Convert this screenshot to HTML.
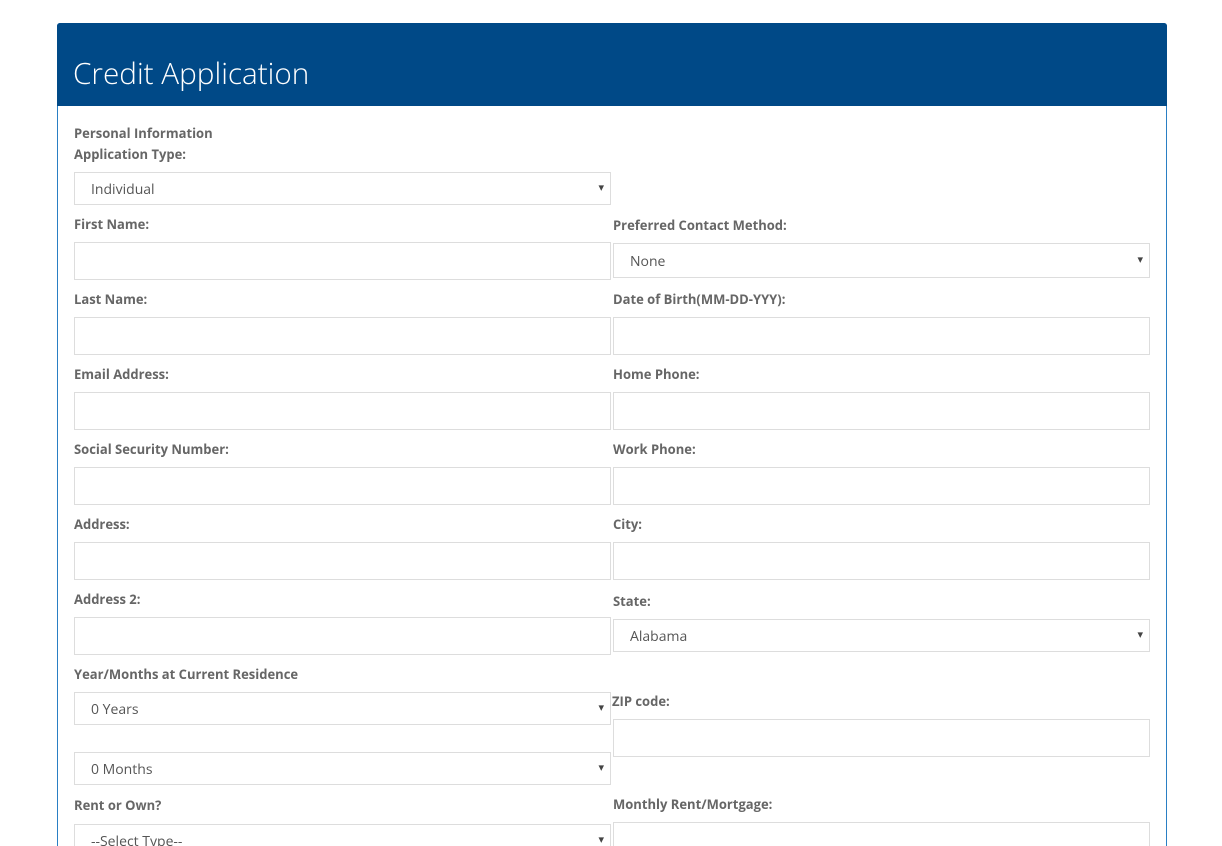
<!DOCTYPE html>
<html style="height:846px;overflow:hidden"><head><style>
body{margin:0;background:#fff;width:1222px;height:846px;overflow:hidden;position:relative;font-family:"Open Sans","Liberation Sans",sans-serif;}
.panel{position:absolute;left:57px;top:23px;width:1108px;height:823px;border:1px solid #2a7fc4;border-bottom:none;border-radius:3px 3px 0 0;box-sizing:content-box;}
.hd{position:absolute;left:57px;top:23px;width:1110px;height:83px;background:#004987;border-radius:3px 3px 0 0;}
.hd span{position:absolute;left:16px;top:30px;font-size:29.7px;font-weight:300;color:#fff;line-height:40px;}
.l{position:absolute;font-size:13px;font-weight:bold;color:#666;line-height:16px;}
.i{position:absolute;box-sizing:border-box;border:1px solid #ddd;background:#fff;width:537px;}
.s{position:absolute;box-sizing:border-box;border:1px solid #ddd;background:#fff;width:537px;font-size:14px;color:#555;padding-left:16px;}
.s:after{content:"▾";position:absolute;right:6px;top:50%;transform:translateY(-55%);font-size:11px;color:#444;}
</style></head><body>
<div class="panel"></div>
<div class="hd"><span>Credit Application</span></div>
<div class="l" style="left:74px;top:125px">Personal Information</div>
<div class="l" style="left:74px;top:146px">Application Type:</div>
<div class="s" style="left:74px;top:172px;height:33px;line-height:33px">Individual</div>
<div class="l" style="left:74px;top:216px">First Name:</div>
<div class="l" style="left:613px;top:217px">Preferred Contact Method:</div>
<div class="i" style="left:74px;top:242px;height:38px"></div>
<div class="s" style="left:613px;top:243px;height:35px;line-height:35px">None</div>
<div class="l" style="left:74px;top:291px">Last Name:</div>
<div class="l" style="left:613px;top:291px">Date of Birth(MM-DD-YYY):</div>
<div class="i" style="left:74px;top:317px;height:38px"></div>
<div class="i" style="left:613px;top:317px;height:38px"></div>
<div class="l" style="left:74px;top:366px">Email Address:</div>
<div class="l" style="left:613px;top:366px">Home Phone:</div>
<div class="i" style="left:74px;top:392px;height:38px"></div>
<div class="i" style="left:613px;top:392px;height:38px"></div>
<div class="l" style="left:74px;top:441px">Social Security Number:</div>
<div class="l" style="left:613px;top:441px">Work Phone:</div>
<div class="i" style="left:74px;top:467px;height:38px"></div>
<div class="i" style="left:613px;top:467px;height:38px"></div>
<div class="l" style="left:74px;top:516px">Address:</div>
<div class="l" style="left:613px;top:516px">City:</div>
<div class="i" style="left:74px;top:542px;height:38px"></div>
<div class="i" style="left:613px;top:542px;height:38px"></div>
<div class="l" style="left:74px;top:591px">Address 2:</div>
<div class="l" style="left:613px;top:593px">State:</div>
<div class="i" style="left:74px;top:617px;height:38px"></div>
<div class="s" style="left:613px;top:619px;height:33px;line-height:33px">Alabama</div>
<div class="l" style="left:74px;top:666px">Year/Months at Current Residence</div>
<div class="s" style="left:74px;top:692px;height:33px;line-height:33px">0 Years</div>
<div class="l" style="left:612px;top:693px">ZIP code:</div>
<div class="i" style="left:613px;top:719px;height:38px"></div>
<div class="s" style="left:74px;top:752px;height:33px;line-height:33px">0 Months</div>
<div class="l" style="left:74px;top:797px">Rent or Own?</div>
<div class="l" style="left:613px;top:796px">Monthly Rent/Mortgage:</div>
<div class="s" style="left:74px;top:824px;height:33px;line-height:33px">--Select Type--</div>
<div class="i" style="left:613px;top:822px;height:38px"></div>
</body></html>
